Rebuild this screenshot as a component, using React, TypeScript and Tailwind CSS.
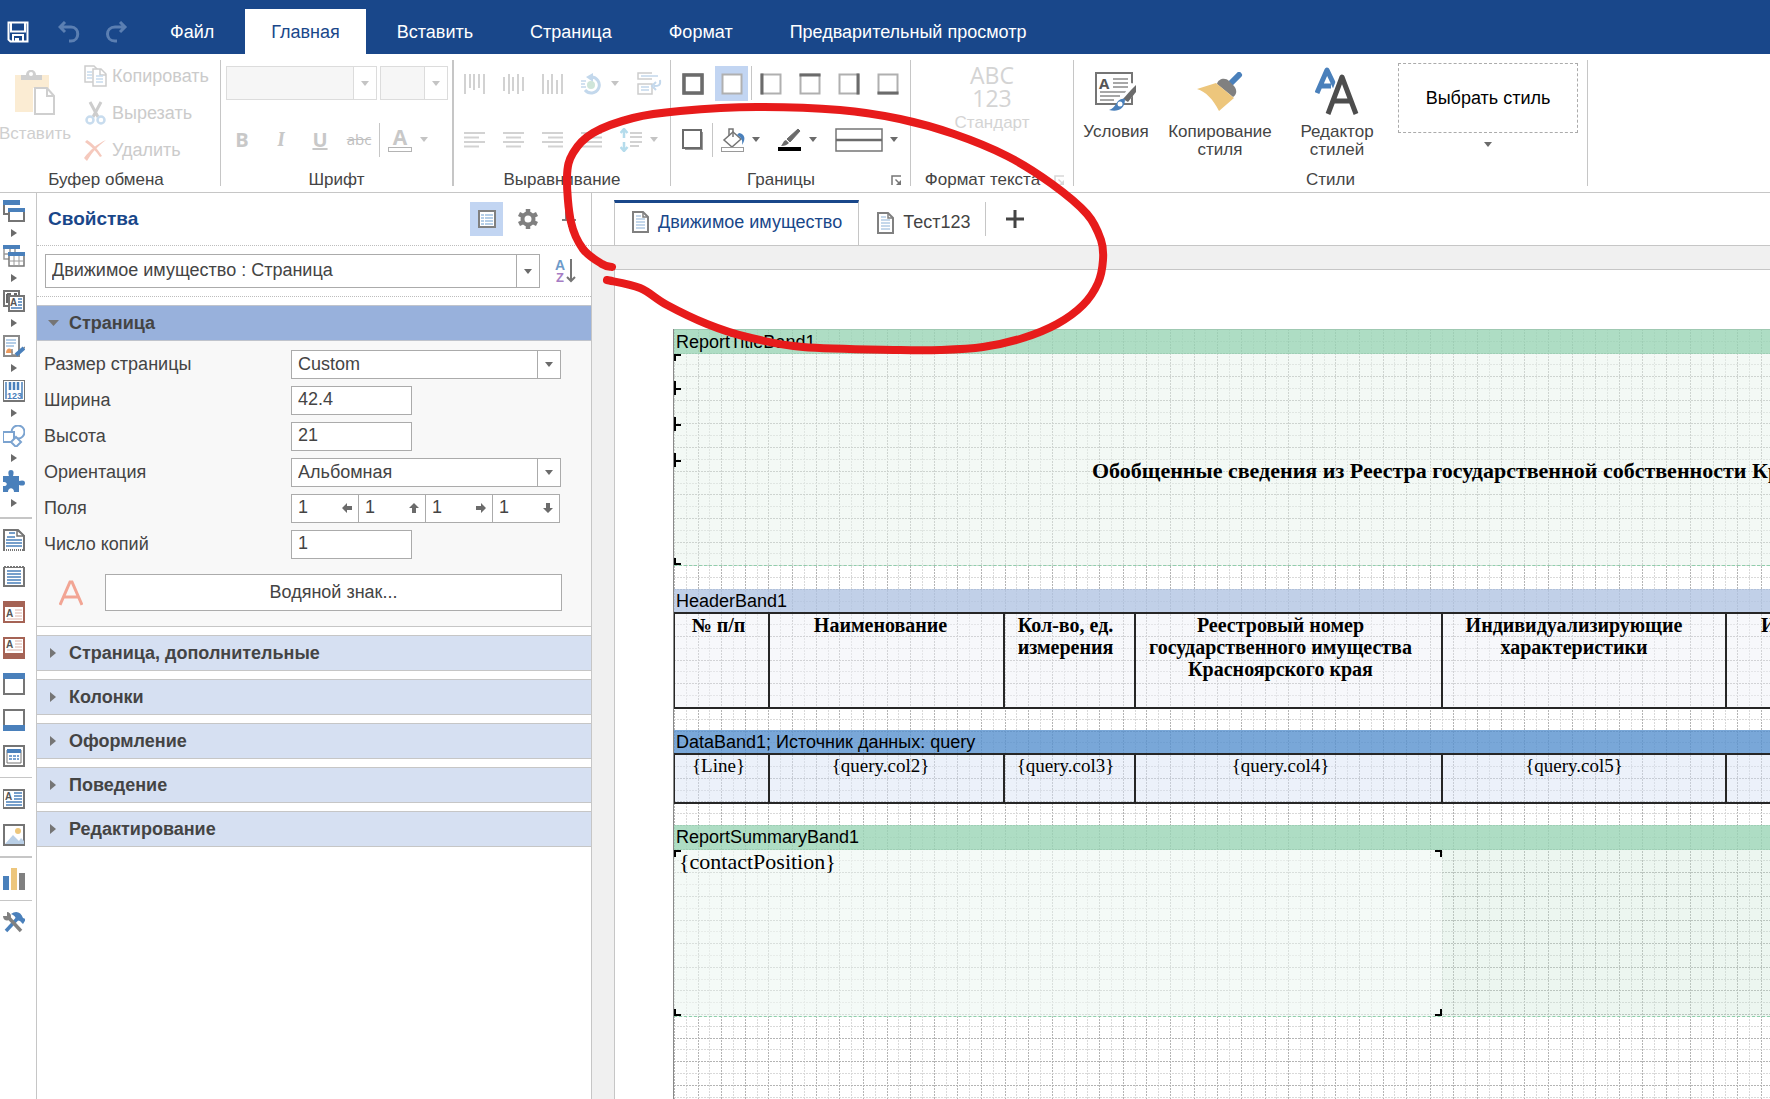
import type { ReactNode } from 'react'

const BLUE = '#4a80bb'
const GREY = '#757575'

/* ---------- small shared parts ---------- */

function Caret({ light }: { light?: boolean }) {
  return (
    <svg width="8" height="5" viewBox="0 0 8 5" className="shrink-0">
      <path d="M0 0h8L4 5z" fill={light ? '#c4c4c4' : '#6b6b6b'} />
    </svg>
  )
}

function Svg({ w = 22, h = 22, children }: { w?: number; h?: number; children: ReactNode }) {
  return (
    <svg width={w} height={h} viewBox={`0 0 ${w} ${h}`} fill="none" className="shrink-0">
      {children}
    </svg>
  )
}

function Launcher({ light }: { light?: boolean }) {
  return (
    <Svg w={11} h={11}>
      <g stroke={light ? '#d8d8d8' : '#757575'} strokeWidth="1.500">
        <path d="M1 10V1h9" />
        <path d="M4.500 4.500l4 4" />
      </g>
      <path d="M10 5v5H5z" fill={light ? '#d8d8d8' : '#757575'} />
    </Svg>
  )
}

function Group({ label, className, launcher, children }: {
  label: string
  className: string
  launcher?: ReactNode
  children: ReactNode
}) {
  return (
    <section className={`my-1.5 flex h-[126px] shrink-0 flex-col border-[#c6c6c6] ${className}`}>
      <div className="min-h-0 flex-1">{children}</div>
      <div className="flex items-center text-[17px] leading-3">
        <span className="flex-1 text-center whitespace-nowrap">{label}</span>
        {launcher && <button aria-label={`${label}: параметры`} className="mr-2">{launcher}</button>}
      </div>
    </section>
  )
}

/* ---------- ribbon icons ---------- */

function Lines({ rows, color = '#d2d2d2', vertical }: { rows: [number, number][]; color?: string; vertical?: boolean }) {
  return (
    <Svg w={21} h={22}>
      {rows.map(([a, b], i) =>
        vertical
          ? <path key={i} d={`M${1 + i * 5 - (i > 1 ? 1 : 0)} ${a}V${b}`} stroke={color} strokeWidth="2" />
          : <path key={i} d={`M${a} ${4 + i * 4.500}H${b}`} stroke={color} strokeWidth="2" />,
      )}
    </Svg>
  )
}

function BorderIcon({ side }: { side: 'all' | 'none' | 'left' | 'top' | 'right' | 'bottom' }) {
  const bold = {
    all: 'M2 2h18v18H2z',
    none: '',
    left: 'M2 0.500v21',
    top: 'M0.500 2h21',
    right: 'M20 0.500v21',
    bottom: 'M0.500 20h21',
  }[side]
  return (
    <Svg>
      <rect x="1.500" y="1.500" width="19" height="19" fill="#fff" stroke="#b0b0b0" strokeWidth="2" />
      <path d={bold} stroke="#6b6b6b" strokeWidth={side === 'all' ? 3.500 : 3} />
    </Svg>
  )
}

function PasteIcon() {
  return (
    <Svg w={42} h={46}>
      <path d="M1 5h34v13H19v24H1z" fill="#fbecd3" />
      <path d="M7 10V5h5c0-7 10-7 10 0h6v5z" fill="#cfcfcf" />
      <circle cx="17" cy="4" r="2" fill="#fff" />
      <path d="M21 18h12l7 8v18H21zM33 18v8h7" fill="#fff" stroke="#cfcfcf" strokeWidth="2" />
    </Svg>
  )
}

function CopyIcon() {
  return (
    <Svg w={23}>
      <path d="M1 1h9l4 4v12H1z" fill="#fff" stroke="#cdcdcd" strokeWidth="1.500" />
      <path d="M3 7h5M3 10h5M3 13h5" stroke="#c8dcee" strokeWidth="1.500" />
      <path d="M9 4h8l5 5v12H9zM16 4v6h6" fill="#fff" stroke="#cdcdcd" strokeWidth="1.500" />
      <path d="M12 11h7M12 14h7M12 17h7" stroke="#c8dcee" strokeWidth="1.500" />
    </Svg>
  )
}

function CutIcon() {
  return (
    <Svg w={23} h={24}>
      <path d="M6 1l8 15M17 1L9 16" stroke="#cdcdcd" strokeWidth="3" />
      <circle cx="6" cy="19" r="3.500" stroke="#c8dcee" strokeWidth="2.500" />
      <circle cx="17" cy="19" r="3.500" stroke="#c8dcee" strokeWidth="2.500" />
    </Svg>
  )
}

function DeleteIcon() {
  return (
    <Svg w={23}>
      <path d="M1 3l2-2c6 4 10 8 15 16l-2 1C12 12 7 7 1 3z" fill="#f5c9bd" />
      <path d="M0 19C6 11 13 5 22 1 14 7 9 12 3 22z" fill="#f5c9bd" />
    </Svg>
  )
}

function RotateIcon() {
  return (
    <Svg w={22}>
      <path d="M10 4a8 8 0 1 1-6 13" stroke="#c3d8ec" strokeWidth="3" />
      <path d="M12 0v9L5 4z" fill="#c3d8ec" />
      <path d="M0 8h5M0 11h4M0 14h5" stroke="#c3d8ec" strokeWidth="1.500" />
      <circle cx="10" cy="12" r="4" fill="#cfe5d9" />
    </Svg>
  )
}

function WrapIcon() {
  return (
    <Svg w={25} h={23}>
      <g stroke="#cdcdcd" strokeWidth="1.500">
        <path d="M15 7H1V1h14M15 12H1v10h14V12z" />
      </g>
      <path d="M4 4h17M4 15h8M4 18h8" stroke="#c3d8ec" strokeWidth="1.500" />
      <path d="M23 8c1 6-2 6-6 6M19 10l-4 4 4 4" stroke="#c3d8ec" strokeWidth="2" />
    </Svg>
  )
}

function LineSpacingIcon() {
  return (
    <Svg w={22} h={24}>
      <path d="M4 3v7M4 14v7M0.500 5L4 1l3.500 4M0.500 19L4 23l3.500-4" stroke="#b5dcec" strokeWidth="2.500" />
      <path d="M10 5h12M10 9h12M10 14h12M10 18h9" stroke="#d2d2d2" strokeWidth="2" />
    </Svg>
  )
}

function ShadowIcon() {
  return (
    <Svg>
      <path d="M3 20h17V3" stroke="#9a9a9a" strokeWidth="2" />
      <rect x="1" y="1" width="18" height="18" fill="#fff" stroke="#6b6b6b" strokeWidth="2" />
    </Svg>
  )
}

function FillIcon() {
  return (
    <Svg w={25} h={24}>
      <path d="M12 4l8 7-9 8-8-7z" fill="#fff" stroke="#757575" strokeWidth="1.500" />
      <path d="M8 8V1h4v8" stroke="#757575" strokeWidth="1.500" />
      <path d="M18 5c6 1 7 6 3 12 1-5-1-8-5-10z" fill={BLUE} />
      <rect x="0.500" y="19.500" width="22" height="4" fill="#fff" stroke="#9a9a9a" />
    </Svg>
  )
}

function PenIcon() {
  return (
    <Svg w={23} h={24}>
      <path d="M20 1l2 2-10 11-3-3z" fill="#6b6b6b" stroke="#6b6b6b" />
      <path d="M8 12l3 3c-2 2-4 3-8 3 2-2 2-5 5-6z" fill="#6b6b6b" />
      <rect y="19" width="23" height="4" fill="#000" />
    </Svg>
  )
}

function ConditionsIcon() {
  return (
    <Svg w={42} h={40}>
      <rect x="1" y="1" width="36" height="31" fill="#fff" stroke="#757575" strokeWidth="2" />
      <text x="4" y="17" fontSize="15" fontWeight="700" fill="#555" fontFamily="Open Sans">A</text>
      <path d="M18 7h15M18 11h15M18 15h15M5 20h28M5 24h20M5 28h14" stroke="#8a8a8a" strokeWidth="1.500" />
      <path d="M40 13L30 28" stroke="#fff" strokeWidth="8" />
      <path d="M41 13v7l-8 10-5-3 8-9z" fill="#6b6b6b" />
      <path d="M30 27c-9-2-8 9-16 11 8 2 16 0 16-11z" fill={BLUE} />
      <circle cx="25" cy="32" r="2.500" fill="#fff" />
    </Svg>
  )
}

function BrushIcon() {
  return (
    <Svg w={46} h={40}>
      <path d="M42 3L33 12" stroke={BLUE} strokeWidth="6" strokeLinecap="round" />
      <path d="M20 12c1-5 8-7 12-3l5 5c4 5 2 9-1 11z" fill="#808080" />
      <path d="M19 11l18 15-15 13C16 27 9 20 0 17z" fill="#edc67c" />
    </Svg>
  )
}

function StyleDesignerIcon() {
  return (
    <Svg w={44} h={48}>
      <path d="M2 26L12 3l11 23M5 19h11" stroke={BLUE} strokeWidth="5" strokeLinejoin="round" />
      <path d="M13 46L27 9l14 37M17 34h20" stroke="#fff" strokeWidth="8" />
      <path d="M13 47L27 10l14 37M17 34h20" stroke="#4d4d4d" strokeWidth="5" strokeLinejoin="round" />
    </Svg>
  )
}

/* ---------- header and ribbon ---------- */

const MENU = ['Файл', 'Главная', 'Вставить', 'Страница', 'Формат', 'Предварительный просмотр']

function TitleBar() {
  return (
    <header className="flex h-[54px] items-end bg-[#19478a] text-white">
      <div className="flex h-[45px] items-center pl-[7px]">
        <button aria-label="Сохранить">
          <Svg>
            <path d="M1.500 1.500h19v19h-17l-2-2zM4 1.500v9h14v-9M6 20v-6h10v6" stroke="#fff" strokeWidth="2" />
            <path d="M8 17h4v4H8z" fill="#fff" />
          </Svg>
        </button>
        <button aria-label="Отменить" className="ml-[29px]">
          <Svg>
            <path d="M7 1L2 6l5 5M2 6h11c9 0 9 14 0 14h-2" stroke="#5b7fb2" strokeWidth="3" />
          </Svg>
        </button>
        <button aria-label="Повторить" className="ml-[26px]">
          <Svg>
            <path d="M14 1l5 5-5 5M19 6H9C-1 6-1 20 9 20h2" stroke="#5b7fb2" strokeWidth="3" />
          </Svg>
        </button>
      </div>
      <nav className="ml-4 flex gap-[5px]">
        {MENU.map(m => (
          <button
            key={m}
            className={`h-[45px] px-[26px] pt-0.5 text-[18px] whitespace-nowrap ${m === 'Главная' ? 'bg-white text-[#19478a]' : ''}`}
          >
            {m}
          </button>
        ))}
      </nav>
    </header>
  )
}

function DisabledCombo({ label, className }: { label: string; className: string }) {
  return (
    <div className={`flex h-[34px] border border-[#dcdcdc] bg-[#f6f6f6] ${className}`}>
      <select aria-label={label} disabled className="min-w-0 flex-1 appearance-none" />
      <span className="flex w-[23px] items-center justify-center border-l border-[#dcdcdc] bg-white"><Caret light /></span>
    </div>
  )
}

const Divider = ({ className = '' }: { className?: string }) => (
  <span className={`h-[34px] w-px bg-[#c6c6c6] ${className}`} />
)

function Ribbon() {
  const clip = [
    { icon: <CopyIcon />, text: 'Копировать' },
    { icon: <CutIcon />, text: 'Вырезать' },
    { icon: <DeleteIcon />, text: 'Удалить' },
  ]
  const letter = 'w-8 text-center font-[Open_Sans] text-[20px] leading-6 text-[#c8c8c8]'
  const big = 'flex flex-col items-center text-[17px] leading-[18px]'
  const side = 'flex h-[35px] w-[33px] items-center justify-center'

  return (
    <div className="flex overflow-hidden border-b border-[#c6c6c6] bg-white">
      <Group label="Буфер обмена" className="w-[221px] border-r pr-2">
        <div className="flex">
          <button disabled className="flex w-[70px] flex-col items-center pt-2.5 text-[17px] text-[#cfcfcf]">
            <PasteIcon />
            <span className="mt-1.5 leading-6">Вставить</span>
          </button>
          <div className="ml-3.5 flex flex-col gap-[5px]">
            {clip.map(c => (
              <button key={c.text} disabled className="flex h-8 items-center gap-[5px] text-[18px] text-[#cbcbcb]">
                {c.icon}{c.text}
              </button>
            ))}
          </div>
        </div>
      </Group>

      <Group label="Шрифт" className="w-[233px] border-r-2">
        <div className="flex flex-col gap-[21px] pt-1.5 pl-[5px]">
          <div className="flex h-[35px] gap-[3px]">
            <DisabledCombo label="Гарнитура" className="w-[151px]" />
            <DisabledCombo label="Размер шрифта" className="w-[68px]" />
          </div>
          <div className="flex h-[35px] items-center gap-[7px]">
            <button disabled className={`${letter} font-bold`}>B</button>
            <button disabled className={`${letter} font-serif font-bold italic`}>I</button>
            <button disabled className={`${letter} font-bold underline`}>U</button>
            <button disabled className="w-8 text-center font-[Open_Sans] text-[15px] text-[#c0c0c0] line-through">abc</button>
            <Divider className="-mx-[3px]" />
            <button disabled aria-label="Цвет шрифта" className="ml-1 flex items-center gap-2">
              <span className="flex w-6 flex-col items-center font-[Open_Sans] text-[21px] leading-5 font-bold text-[#c8c8c8]">
                A<span className="h-[5px] w-6 border border-[#b4b4b4]" />
              </span>
              <Caret light />
            </button>
          </div>
        </div>
      </Group>

      <Group label="Выравнивание" className="w-[217px] border-r">
        <div className="flex flex-col gap-[21px] pt-1.5 pl-[10px]">
          <div className="flex h-[35px] items-center gap-[18px]">
            <button disabled aria-label="По верхнему краю"><Lines vertical rows={[[1, 21], [1, 15], [1, 17], [1, 15], [1, 21]]} /></button>
            <button disabled aria-label="По середине"><Lines vertical rows={[[4, 18], [1, 21], [4, 18], [1, 21], [4, 18]]} /></button>
            <button disabled aria-label="По нижнему краю"><Lines vertical rows={[[1, 21], [7, 21], [1, 21], [7, 21], [1, 21]]} /></button>
            <button disabled aria-label="Угол" className="flex items-center gap-2"><RotateIcon /><Caret light /></button>
            <button disabled aria-label="Перенос по словам"><WrapIcon /></button>
          </div>
          <div className="flex h-[35px] items-center gap-[18px]">
            <button disabled aria-label="По левому краю"><Lines rows={[[0, 21], [0, 15], [0, 21], [0, 15]]} /></button>
            <button disabled aria-label="По центру"><Lines rows={[[0, 21], [3, 18], [0, 21], [3, 18]]} /></button>
            <button disabled aria-label="По правому краю"><Lines rows={[[0, 21], [6, 21], [0, 21], [6, 21]]} /></button>
            <button disabled aria-label="По ширине"><Lines rows={[[0, 21], [0, 21], [0, 21], [0, 21]]} /></button>
            <button disabled aria-label="Интервал" className="flex items-center gap-2"><LineSpacingIcon /><Caret light /></button>
          </div>
        </div>
      </Group>

      <Group label="Границы" className="w-[240px] border-r" launcher={<Launcher />}>
        <div className="flex flex-col gap-[21px] pt-1.5 pl-[5px]">
          <div className="flex h-[35px] gap-1.5">
            <button aria-label="Все границы" className={side}><BorderIcon side="all" /></button>
            <button aria-label="Без границ" className={`${side} bg-[#c2d5f2]`}><BorderIcon side="none" /></button>
            <Divider className="-mr-1 -ml-[3px]" />
            <button aria-label="Левая" className={side}><BorderIcon side="left" /></button>
            <button aria-label="Верхняя" className={side}><BorderIcon side="top" /></button>
            <button aria-label="Правая" className={side}><BorderIcon side="right" /></button>
            <button aria-label="Нижняя" className={side}><BorderIcon side="bottom" /></button>
          </div>
          <div className="flex h-[35px] items-center">
            <button aria-label="Тень" className={side}><ShadowIcon /></button>
            <Divider className="ml-[3px]" />
            <button aria-label="Заливка" className="ml-2 flex items-center gap-1.5"><FillIcon /><Caret /></button>
            <button aria-label="Цвет границы" className="ml-[18px] flex items-center gap-2"><PenIcon /><Caret /></button>
            <button aria-label="Стиль границы" className="ml-[18px] flex items-center gap-1.5">
              <Svg w={49} h={24}>
                <rect x="1" y="1" width="46" height="22" stroke="#757575" strokeWidth="1.500" />
                <path d="M1 12h46" stroke="#6b6b6b" strokeWidth="2.500" />
              </Svg>
              <Caret />
            </button>
          </div>
        </div>
      </Group>

      <Group label="Формат текста" className="w-[163px] border-r" launcher={<Launcher light />}>
        <button disabled className="flex w-full flex-col items-center pt-1 text-[#d4d4d4]">
          <span className="font-[Open_Sans] text-[23px] leading-[23px]">ABC<br />123</span>
          <span className="mt-[3px] text-[17px] leading-5">Стандарт</span>
        </button>
      </Group>

      <Group label="Стили" className="w-[514px] border-r">
        <div className="flex">
          <button className={`${big} ml-[7px] w-[70px] pt-3`}>
            <ConditionsIcon /><span className="mt-[11px]">Условия</span>
          </button>
          <button className={`${big} ml-4 w-[106px] pt-3`}>
            <BrushIcon /><span className="mt-[11px]">Копирование<br />стиля</span>
          </button>
          <button className={`${big} ml-[25px] w-[78px] pt-[7px]`}>
            <StyleDesignerIcon /><span className="mt-2">Редактор<br />стилей</span>
          </button>
          <button className="ml-[22px] flex flex-col items-center pt-[3px] text-[18px] text-black">
            <span className="flex h-[70px] w-[180px] items-center justify-center border border-dashed border-[#ababab]">Выбрать стиль</span>
            <span className="mt-[9px]"><Caret /></span>
          </button>
        </div>
      </Group>
    </div>
  )
}

/* ---------- toolbox ---------- */

const Frame = ({ color = GREY }: { color?: string }) => (
  <rect x="1" y="1" width="20" height="20" fill="#fff" stroke={color} strokeWidth="2" />
)

const toolsExpandable: [string, ReactNode][] = [
  ['Бэнды', <>
    <path d="M1 3v11h4" stroke={GREY} strokeWidth="2" /><path d="M0 0h17v5H0z" fill={BLUE} />
    <rect x="6" y="9" width="15" height="12" fill="#fff" stroke={GREY} strokeWidth="2" /><path d="M5 8h17v4H5z" fill={BLUE} />
  </>],
  ['Кросс-бэнды', <>
    <path d="M1 3v11h5M1 9h15M7 3v6M12 3v6" stroke="#9a9a9a" strokeWidth="1.500" /><path d="M0 0h17v4H0z" fill={BLUE} />
    <path d="M6 10v11h15V10" fill="#fff" stroke={GREY} strokeWidth="1.500" />
    <path d="M6 16h15M11 10v11M16 10v11" stroke="#9a9a9a" strokeWidth="1" /><path d="M5 7h17v4H5z" fill={BLUE} />
  </>],
  ['Компоненты', <>
    <path d="M1 1h15v15H1z" fill="#fff" stroke={GREY} strokeWidth="2" />
    <path d="M4 4v9M4 4h4M11 4h3" stroke="#666" strokeWidth="2" />
    <rect x="6" y="6" width="15" height="15" fill="#fff" stroke={GREY} strokeWidth="2" />
    <text x="7" y="16" fontSize="10" fontWeight="700" fill="#555" fontFamily="Liberation Sans">A</text>
    <path d="M15 9h4M15 12h4M15 15h4M8 18h11" stroke={BLUE} strokeWidth="1.500" />
  </>],
  ['Подпись', <>
    <path d="M1 1h15v20H1z" fill="#fff" stroke="#8a8a8a" strokeWidth="2" />
    <path d="M3 5h10M3 8h10M3 11h8" stroke="#9dbfe0" strokeWidth="1.500" />
    <path d="M3 18c0-6 6-6 7 0z" fill="#ec9a5c" />
    <path d="M9 14v6h5l8-8" stroke="#8a8a8a" strokeWidth="1.500" />
    <path d="M13 20l8-7" stroke={BLUE} strokeWidth="4" />
  </>],
  ['Штрихкоды', <>
    <rect x="0" y="0" width="22" height="21" rx="1" fill="#fff" stroke={GREY} strokeWidth="2" />
    <path d="M3 2v17M19 2v17" stroke={BLUE} strokeWidth="1.500" /><path d="M7 2v8M11 2v8M15 2v8" stroke={BLUE} strokeWidth="2.500" />
    <text x="4" y="19" fontSize="9" fontWeight="700" fill={BLUE} fontFamily="Liberation Sans">123</text>
  </>],
  ['Фигуры', <>
    <circle cx="15" cy="7" r="6.500" fill="#fff" stroke="#7ba3d0" strokeWidth="2" />
    <rect x="0" y="7" width="11" height="10" fill="#fff" stroke="#7ba3d0" strokeWidth="2" />
    <path d="M13 12l5 5-5 5-5-5z" fill="#fff" stroke="#7ba3d0" strokeWidth="2" />
  </>],
  ['Прочее', <path d="M0 6h6c-1-3-1-6 2-6s3 3 2 6h6v5c3-1 6-1 6 2s-3 3-6 2v7h-5c0-5-6-5-6 0H0v-6c5 1 5-5 0-4z" fill={BLUE} />],
]

const blueLines = 'M4 6h14M4 9h14M4 12h14M4 15h14M4 18h14'

const tools: [string, ReactNode][] = [
  ['Заголовок отчёта', <>
    <path d="M1 22V1h14l6 6v15" fill="#fff" stroke={GREY} strokeWidth="2" /><path d="M14 1v6h7z" fill="#fff" stroke={GREY} strokeWidth="1.500" />
    <path d="M6 4h6M4 8h8M3 11h16M3 14h16M3 17h16" stroke={BLUE} strokeWidth="1.500" /><path d="M1 21h20" stroke={GREY} strokeWidth="2" strokeDasharray="1 1" />
  </>],
  ['Итог отчёта', <>
    <rect x="1" y="2" width="20" height="19" fill="#fff" stroke={GREY} strokeWidth="2" /><path d="M0 1h22" stroke="#fff" strokeWidth="2" strokeDasharray="1 2" />
    <path d={blueLines} stroke={BLUE} strokeWidth="1.500" />
  </>],
  ['Верхний колонтитул', <>
    <Frame color="#a56355" /><path d="M0 0h22v6H0z" fill="#a56355" />
    <text x="3" y="16" fontSize="10" fontWeight="700" fill="#555" fontFamily="Liberation Sans">A</text>
    <path d="M12 9h7M12 12h7M12 15h7M4 18h15" stroke="#dcb3a9" />
  </>],
  ['Нижний колонтитул', <>
    <Frame color="#a56355" /><path d="M0 16h22v6H0z" fill="#a56355" />
    <text x="3" y="11" fontSize="10" fontWeight="700" fill="#555" fontFamily="Liberation Sans">A</text>
    <path d="M12 4h7M12 7h7M12 10h7M4 13h15" stroke="#dcb3a9" />
  </>],
  ['Заголовок группы', <><Frame /><path d="M0 0h22v6H0z" fill={BLUE} /></>],
  ['Итог группы', <><Frame /><path d="M0 16h22v6H0z" fill={BLUE} /></>],
  ['Панель', <>
    <Frame /><path d="M4 5h14v13H4z" fill="#fff" stroke={GREY} /><path d="M4 4h14v4H4z" fill={BLUE} />
    <path d="M6 11h10M6 14h10" stroke="#7ba3d0" strokeWidth="2" strokeDasharray="3 1" />
  </>],
]

function Tool({ name, icon }: { name: string; icon: ReactNode }) {
  return <button aria-label={name} className="h-[22px]"><Svg>{icon}</Svg></button>
}

function Toolbox() {
  return (
    <aside className="flex w-[37px] shrink-0 flex-col border-r border-[#c6c6c6] pt-[7px]">
      {toolsExpandable.map(([name, icon]) => (
        <button key={name} aria-label={name} className="flex h-[45px] flex-col pl-[3px]">
          <Svg>{icon}</Svg>
          <svg width="6" height="8" viewBox="0 0 6 8" className="mt-[7px] ml-2"><path d="M0 0l6 4-6 4z" fill="#6b6b6b" /></svg>
        </button>
      ))}
      <hr className="mt-0.5 mr-1 border-t-2 border-[#c6c6c6]" />
      <div className="mt-[10px] flex flex-col gap-3.5 pl-[3px]">
        {tools.map(([name, icon]) => <Tool key={name} name={name} icon={icon} />)}
      </div>
      <hr className="mt-[10px] mr-1 border-[#c6c6c6]" />
      <div className="my-[10px] flex flex-col gap-3.5 pl-[3px]">
        <Tool name="Текст" icon={<>
          <rect x="0" y="2" width="21" height="18" fill="#fff" stroke={GREY} strokeWidth="2" />
          <text x="2" y="12" fontSize="10" fontWeight="700" fill="#555" fontFamily="Liberation Sans">A</text>
          <path d="M11 5h8M11 8h8M11 11h8M3 14h16M3 17h16" stroke={BLUE} strokeWidth="1.500" />
        </>} />
        <Tool name="Изображение" icon={<>
          <Frame /><path d="M2 20l8-9 6 6 2-3 3 3v3z" fill="#b9cfe6" /><circle cx="15" cy="7" r="3" fill="#edc67c" />
        </>} />
      </div>
      <hr className="mr-1 border-t-2 border-[#c6c6c6]" />
      <div className="my-[10px] flex flex-col pl-[3px]">
        <Tool name="Диаграмма" icon={<>
          <path d="M0 8h6v14H0z" fill={BLUE} /><path d="M8 0h6v22H8z" fill="#edc67c" /><path d="M16 5h6v17h-6z" fill="#808080" />
        </>} />
      </div>
      <hr className="mr-1 border-[#c6c6c6]" />
      <div className="my-[10px] flex flex-col pl-[3px]">
        <Tool name="Настройка" icon={<>
          <path d="M3 20L14 8" stroke={BLUE} strokeWidth="3.500" /><path d="M8 3c5-4 10-2 12 4l3 1-3 5-3-3-4-1c0-3-2-5-5-6z" fill={BLUE} />
          <path d="M6 7l12 13" stroke="#808080" strokeWidth="3.500" /><path d="M4 1v4H0c0 6 8 6 8 0 0-2-2-4-4-4z" fill="#808080" />
        </>} />
      </div>
    </aside>
  )
}

/* ---------- properties ---------- */

function Combo({ id, label, value, className }: { id: string; label?: string; value: string; className: string }) {
  return (
    <div className={`flex border border-[#ababab] bg-white ${className}`}>
      <select id={id} aria-label={label} defaultValue={value} className="min-w-0 flex-1 appearance-none px-1.5 pb-0.5 outline-none">
        <option>{value}</option>
      </select>
      <span className="pointer-events-none flex w-[23px] items-center justify-center border-l border-[#ababab]"><Caret /></span>
    </div>
  )
}

function Row({ id, label, children }: { id: string; label: string; children: ReactNode }) {
  return (
    <div className="flex h-9 items-center">
      <label htmlFor={id} className="w-[247px] shrink-0">{label}</label>
      {children}
    </div>
  )
}

const field = 'h-[29px] w-[121px] border border-[#ababab] bg-white px-1.5 pb-0.5 outline-none'

const arrowTurn = ['rotate-0', 'rotate-90', 'rotate-180', '-rotate-90']
const sides = ['Левое поле', 'Верхнее поле', 'Правое поле', 'Нижнее поле']

function Margins() {
  return (
    <div className="flex">
      {sides.map((s, i) => (
        <div key={s} className="-mr-px flex h-[29px] w-[68px] items-center border border-[#ababab] bg-white pr-1.5">
          <input id={i === 0 ? 'margins' : undefined} aria-label={s} defaultValue="1" className="w-full min-w-0 pb-0.5 pl-1.5 outline-none" />
          <svg width="10" height="10" viewBox="0 0 10 10" className={`shrink-0 ${arrowTurn[i]}`}>
            <path d="M0 5l5-5v3h5v4H5v3z" fill="#6b6b6b" />
          </svg>
        </div>
      ))}
    </div>
  )
}

const SECTIONS = ['Страница, дополнительные', 'Колонки', 'Оформление', 'Поведение', 'Редактирование']

function Properties() {
  return (
    <aside className="flex w-[555px] shrink-0 flex-col border-r border-[#c6c6c6] text-[18px]">
      <div className="flex h-[52px] items-center pl-[11px]">
        <h2 className="flex-1 text-[19px] font-bold text-[#19478a]">Свойства</h2>
        <button aria-label="Свойства" className="flex h-[34px] w-[33px] items-center justify-center bg-[#c2d5f2]">
          <Svg w={18} h={18}>
            <rect x="1" y="1" width="16" height="16" fill="#fff" stroke="#808080" strokeWidth="2" />
            <path d="M3 5h3M3 8h3M3 11h3M3 14h3M7 5h8M7 8h8M7 11h8M7 14h8" stroke="#9dbfe0" strokeWidth="1.500" />
          </Svg>
        </button>
        <button aria-label="Настройки" className="ml-[15px]">
          <Svg w={20} h={20}>
            <circle cx="10" cy="10" r="5.500" stroke="#808080" strokeWidth="4" />
            <path d="M10 0v4M10 16v4M1 5l4 2M15 13l4 2M1 15l4-2M15 7l4-2" stroke="#808080" strokeWidth="4.500" />
          </Svg>
        </button>
        <button aria-label="Закрепить" className="mr-3 ml-6">
          <Svg w={17} h={20}>
            <path d="M3 2h8M4 2v9M10 2v9M0 11h14M7 11v7" stroke="#808080" strokeWidth="2" />
          </Svg>
        </button>
      </div>
      <div className="flex items-center border-y border-dotted border-[#bdbdbd] py-2 pl-2">
        <Combo id="component" label="Компонент" value="Движимое имущество : Страница" className="h-[34px] w-[495px]" />
        <button aria-label="Сортировка" className="ml-[15px]">
          <Svg w={22} h={26}>
            <text x="0" y="12" fontSize="14" fontWeight="700" fill="#6d9ac9" fontFamily="Liberation Sans">A</text>
            <text x="1" y="24" fontSize="13" fontWeight="700" fill="#a67cc4" fontFamily="Liberation Sans">Z</text>
            <path d="M16 1v22M12 19l4 4 4-4" stroke="#757575" strokeWidth="2" />
          </Svg>
        </button>
      </div>

      <button className="mt-2 flex h-9 shrink-0 items-center gap-[10px] border-y border-[#c0c4cc] bg-[#98b1dc] pl-[11px] font-bold">
        <svg width="11" height="6" viewBox="0 0 11 6"><path d="M0 0h11L5.500 6z" fill="#757575" /></svg>
        Страница
      </button>
      <div className="border-b border-[#c6c6c6] bg-[#f8f8f8] pt-[5px] pb-[15px] pl-[7px]">
        <Row id="size" label="Размер страницы"><Combo id="size" value="Custom" className="h-[29px] w-[270px]" /></Row>
        <Row id="width" label="Ширина"><input id="width" defaultValue="42.4" className={field} /></Row>
        <Row id="height" label="Высота"><input id="height" defaultValue="21" className={field} /></Row>
        <Row id="orientation" label="Ориентация"><Combo id="orientation" value="Альбомная" className="h-[29px] w-[270px]" /></Row>
        <Row id="margins" label="Поля"><Margins /></Row>
        <Row id="copies" label="Число копий"><input id="copies" defaultValue="1" className={field} /></Row>
        <div className="mt-3 flex items-center">
          <span className="w-[61px] pl-[15px]">
            <Svg w={24} h={26}>
              <path d="M1 25L11 2h2l10 23M5 17h14" stroke="#f2a594" strokeWidth="3" />
            </Svg>
          </span>
          <button className="h-[37px] w-[457px] border border-[#ababab] bg-white">Водяной знак...</button>
        </div>
      </div>
      <div className="mt-2 flex flex-col gap-2">
        {SECTIONS.map(s => (
          <button key={s} className="flex h-9 items-center gap-[13px] border-y border-[#c6c6c6] bg-[#d6e0f2] pl-[13px] font-bold">
            <svg width="6" height="10" viewBox="0 0 6 10"><path d="M0 0l6 5-6 5z" fill="#757575" /></svg>
            {s}
          </button>
        ))}
      </div>
    </aside>
  )
}

/* ---------- report designer ---------- */

function PageIcon() {
  return (
    <Svg w={17} h={22}>
      <path d="M1 1h10l5 5v15H1z" fill="#fff" stroke="#808080" strokeWidth="2" />
      <path d="M11 1v5h5" stroke="#808080" strokeWidth="1.500" />
      <path d="M4 5h5M4 8h9M4 11h9M4 14h9M4 17h9" stroke="#b3cbe5" strokeWidth="1.500" />
    </Svg>
  )
}

// half a centimetre at the current zoom is 23.62px, minor lines split it in two
const STEP = 11.81

function Grid() {
  const line = (i: number) => (i % 2 === 0 ? '#b4b4b4' : '#d9d9d9')
  return (
    <svg width="100%" height="100%" className="absolute inset-0" shapeRendering="crispEdges">
      {Array.from({ length: 220 }, (_, i) => (
        <line key={i} x1={Math.round(i * STEP) + 0.5} x2={Math.round(i * STEP) + 0.5} y1="0" y2="100%" stroke={line(i)} strokeDasharray="2 1" />
      ))}
      {Array.from({ length: 120 }, (_, i) => (
        <line key={i} y1={Math.round(i * STEP) + 0.5} y2={Math.round(i * STEP) + 0.5} x1="0" x2="100%" stroke={line(i)} strokeDasharray="2 1" />
      ))}
    </svg>
  )
}

function Band({ title, className }: { title: string; className: string }) {
  return <div className={`relative -ml-px shrink-0 pl-[3px] text-[18px] leading-6 text-black ${className}`}>{title}</div>
}

const corner = 'absolute h-[7px] w-[7px] border-black'

const COLS = [
  { head: '№ п/п', cell: '{Line}', width: 'w-[95px]', pad: 'pr-1.5' },
  { head: 'Наименование', cell: '{query.col2}', width: 'w-[235px]', pad: 'pr-3' },
  { head: 'Кол-во, ед. измерения', cell: '{query.col3}', width: 'w-[131px]', pad: 'pr-3 pl-1' },
  { head: 'Реестровый номер государственного имущества Красноярского края', cell: '{query.col4}', width: 'w-[307px]', pad: 'pr-5 pl-1' },
  { head: 'Индивидуализирующие характеристики', cell: '{query.col5}', width: 'w-[284px]', pad: 'pr-5' },
]

function BandTable({ head, className }: { head?: boolean; className: string }) {
  const line = 'border-2 border-[#262626] align-top'
  return (
    <table className={`relative -ml-px w-[calc(100%+3px)] table-fixed border-collapse text-center font-['Liberation_Serif',serif] leading-[22px] text-black ${className}`}>
      <tbody>
        <tr className={head ? 'h-[95px] text-[20px]' : 'h-[49px] text-[19px]'}>
          {COLS.map(c =>
            head
              ? <th key={c.head} scope="col" className={`${line} ${c.width} ${c.pad}`}>{c.head}</th>
              : <td key={c.head} className={`${line} ${c.width} ${c.pad}`}>{c.cell}</td>,
          )}
          {head
            ? <th scope="col" className={`overflow-hidden pl-[34px] text-left ${line}`}>И</th>
            : <td className={line} />}
        </tr>
      </tbody>
    </table>
  )
}

function Designer() {
  const boxes = ['h-[34px]', 'h-9', 'h-9', 'h-[105px]']
  return (
    <main className="flex min-w-0 flex-1 flex-col">
      <div className="flex h-[53px] items-end border-b border-[#c6c6c6] pl-[22px] text-[18px]">
        <button className="flex h-[45px] items-center gap-[9px] border-x border-t-[3px] border-x-[#c6c6c6] border-t-[#19478a] pr-4 pb-1 pl-[17px] whitespace-nowrap text-[#19478a]">
          <PageIcon />Движимое имущество
        </button>
        <button className="flex h-[45px] items-center gap-[9px] pr-[15px] pl-[18px]"><PageIcon />Тест123</button>
        <Divider className="mb-[9px]" />
        <button aria-label="Добавить страницу" className="mb-[17px] ml-5">
          <Svg w={18} h={18}><path d="M9 0v18M0 9h18" stroke="#444" strokeWidth="3" /></Svg>
        </button>
      </div>
      <div className="flex flex-1 flex-col bg-[#f0f0f0] pt-[23px] pl-[22px]">
        <div className="flex flex-1 flex-col border-t border-l border-[#c6c6c6] bg-white pt-[59px] pl-[58px]">
          <div className="relative flex flex-1 flex-col overflow-hidden border-l border-[#8a8a8a]">
            <Grid />
            <Band title="ReportTitleBand1" className="h-[25px] border-t border-[#9fc9b2] bg-[#9ad4b5]/80" />
            <div className="relative border-b border-dashed border-[#8fcfab] bg-[#e7f3ec]/50">
              {boxes.map((h, i) => (
                <div key={i} className={`relative ${h}`}>
                  <span className={`${corner} top-0 left-0 border-t-2 border-l-2`} />
                  <span className={`${corner} bottom-0 left-0 border-l-2 ${i === 3 ? 'border-b-2' : ''}`} />
                  {i === 3 && (
                    <h1 className="overflow-hidden pb-1 pl-[418px] font-['Liberation_Serif',serif] text-[22px] leading-[22px] font-bold whitespace-nowrap text-black">
                      Обобщенные сведения из Реестра государственной собственности Кр
                    </h1>
                  )}
                </div>
              ))}
            </div>
            <div className="h-[23px] shrink-0" />
            <Band title="HeaderBand1" className="h-[23px] bg-[#b2c4e2]/80" />
            <BandTable head className="bg-[#eff2f7]/50" />
            <div className="h-[21px] shrink-0" />
            <Band title="DataBand1; Источник данных: query" className="h-[23px] bg-[#5791ce]/80" />
            <BandTable className="bg-[#d9e4f5]/50" />
            <div className="h-[21px] shrink-0" />
            <Band title="ReportSummaryBand1" className="h-[25px] bg-[#9ad4b5]/80" />
            <div className="relative border-b border-dashed border-[#8fcfab] bg-[#c8e4d5]/35">
              <div className="relative h-[166px] w-[768px] bg-white/45">
                <span className={`${corner} top-0 left-0 border-t-2 border-l-2`} />
                <span className={`${corner} top-0 right-0 border-t-2 border-r-2`} />
                <span className={`${corner} bottom-0 left-0 border-b-2 border-l-2`} />
                <span className={`${corner} right-0 bottom-0 border-r-2 border-b-2`} />
                <p className="pl-[5px] font-['Liberation_Serif',serif] text-[22px] leading-6 text-black">{'{contactPosition}'}</p>
              </div>
            </div>
          </div>
        </div>
      </div>
    </main>
  )
}

/* ---------- hand-drawn marker ---------- */

const STROKE = [
  [612, 267], [602, 264], [583, 249], [571, 222], [567, 177], [573, 153], [593, 133], [633, 118], [680, 111],
  [757, 107], [840, 110], [900, 119], [954, 134], [1007, 156], [1052, 184], [1087, 214], [1101, 240], [1103, 260],
  [1098, 283], [1083, 305], [1057, 324], [1023, 338], [983, 347], [940, 350], [900, 350], [803, 347], [747, 337],
  [707, 324], [667, 305], [640, 288], [607, 280],
]

function smooth(p: number[][]) {
  let d = `M${p[0][0]} ${p[0][1]}`
  for (let i = 0; i < p.length - 1; i++) {
    const a = p[i - 1] ?? p[i], b = p[i], c = p[i + 1], e = p[i + 2] ?? c
    d += `C${b[0] + (c[0] - a[0]) / 6} ${b[1] + (c[1] - a[1]) / 6} ${c[0] - (e[0] - b[0]) / 6} ${c[1] - (e[1] - b[1]) / 6} ${c[0]} ${c[1]}`
  }
  return d
}

export default function App() {
  return (
    <div className="relative flex min-h-screen flex-col overflow-hidden bg-white font-['Liberation_Sans',Arial,sans-serif] text-[#444]">
      <TitleBar />
      <Ribbon />
      <div className="flex flex-1">
        <Toolbox />
        <Properties />
        <Designer />
      </div>
      <svg width="1120" height="370" className="pointer-events-none absolute top-0 left-0" fill="none">
        <path d={smooth(STROKE)} stroke="#e71b1b" strokeWidth="8" strokeLinecap="round" strokeLinejoin="round" />
      </svg>
    </div>
  )
}
